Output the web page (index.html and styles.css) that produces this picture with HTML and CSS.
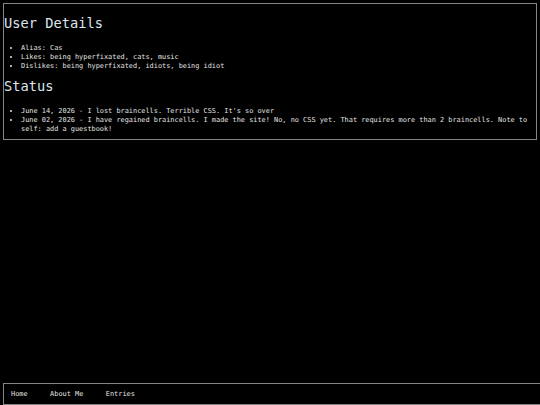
FILE: index.html
```html
<!DOCTYPE html>
<html lang="en">
<head>
<meta charset="utf-8">
<title>User Details</title>
<link rel="stylesheet" href="styles.css">
</head>
<body>
<main class="panel">
  <h2 class="heading">User Details</h2>
  <ul class="list">
    <li>Alias: Cas</li>
    <li>Likes: being hyperfixated, cats, music</li>
    <li>Dislikes: being hyperfixated, idiots, being idiot</li>
  </ul>
  <h2 class="heading">Status</h2>
  <ul class="list">
    <li>June 14, 2026 - I lost braincells. Terrible CSS. It's so over</li>
    <li>June 02, 2026 - I have regained braincells. I made the site! No, no CSS yet. That requires more than 2 braincells. Note to self: add a guestbook!</li>
  </ul>
</main>
<footer class="footer">
  <nav class="nav">
    <a class="nav-link" href="#">Home</a>
    <a class="nav-link" href="#">About Me</a>
    <a class="nav-link" href="#">Entries</a>
  </nav>
</footer>
</body>
</html>
```

FILE: styles.css
```css
html {
  height: 100%;
  background: #000;
}
body {
  margin: 0;
  padding: 3px 3px 0;
  height: 405px;
  box-sizing: border-box;
  display: flex;
  flex-direction: column;
  overflow: hidden;
  background: #000;
  color: #e4e4e4;
  font-family: "DejaVu Sans Mono", monospace;
  font-size: 6.9px;
  line-height: 9px;
  -webkit-font-smoothing: antialiased;
}
.panel {
  border: 1px solid #858585;
  background: #000;
  padding: 0;
}
.heading {
  font-size: 13.7px;
  line-height: 16px;
  font-weight: normal;
  color: #dde6ef;
  margin: 11px 0 13px;
}
.list {
  margin: 0 0 7px;
  padding-left: 17px;
}
.list + .heading {
  margin-top: 0;
}
.list:last-child {
  margin-bottom: 5px;
}
.footer {
  margin-top: auto;
  margin-right: -20px;
  height: 22px;
  box-sizing: border-box;
  border: 1px solid #858585;
  display: flex;
  align-items: center;
  padding-left: 7px;
  padding-top: 1px;
}
.nav {
  display: flex;
  gap: 22.5px;
}
.nav-link {
  color: #e4e4e4;
  text-decoration: none;
}
```
